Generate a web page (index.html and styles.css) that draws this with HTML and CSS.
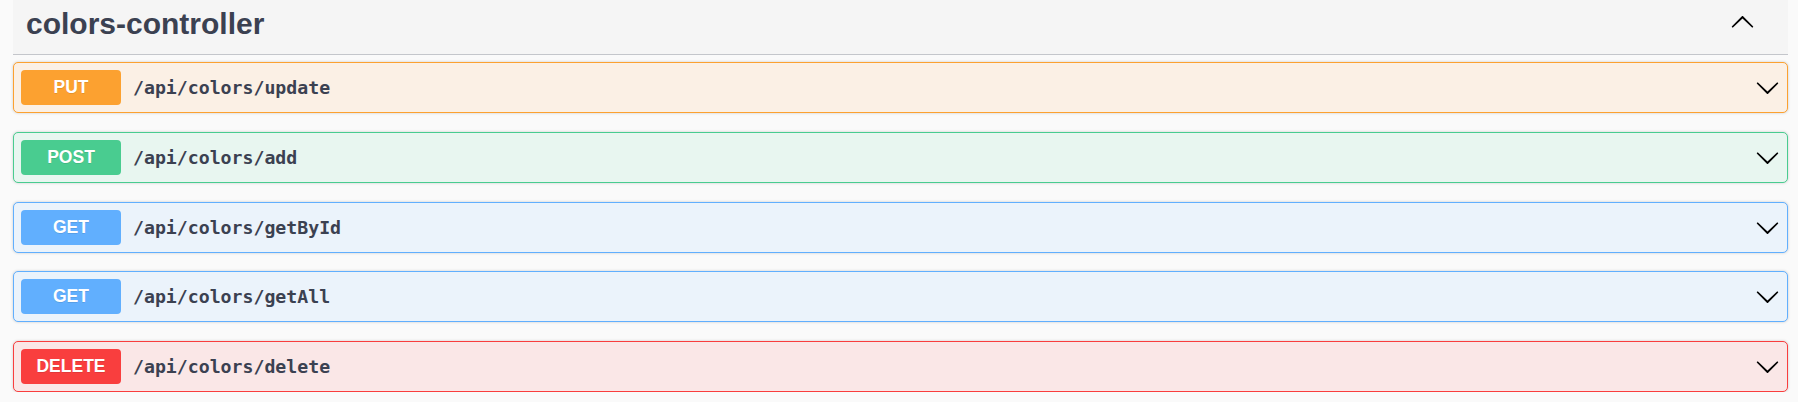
FILE: index.html
```html
<!DOCTYPE html>
<html lang="en">
<head>
<meta charset="utf-8">
<title>colors-controller</title>
<link rel="stylesheet" href="styles.css">
</head>
<body>
<div class="wrapper">
  <section class="tag-section">
    <h3 class="tag-header">
      <span class="tag-title">colors-controller</span>
      <svg class="arrow arrow-up" viewBox="0 0 20 20" width="25" height="25" aria-hidden="true"><path d="M17.418 6.109c.272-.268.709-.268.979 0s.271.701 0 .969l-7.908 7.83c-.27.268-.707.268-.979 0l-7.908-7.83c-.27-.268-.27-.701 0-.969.271-.268.709-.268.979 0L10 13.25l7.418-7.141z"/></svg>
    </h3>
    <div class="ops">
      <div class="opblock op-put">
        <span class="method">PUT</span>
        <span class="path">/api/colors/update</span>
        <svg class="arrow" viewBox="0 0 20 20" width="25" height="25" aria-hidden="true"><path d="M17.418 6.109c.272-.268.709-.268.979 0s.271.701 0 .969l-7.908 7.83c-.27.268-.707.268-.979 0l-7.908-7.83c-.27-.268-.27-.701 0-.969.271-.268.709-.268.979 0L10 13.25l7.418-7.141z"/></svg>
      </div>
      <div class="opblock op-post">
        <span class="method">POST</span>
        <span class="path">/api/colors/add</span>
        <svg class="arrow" viewBox="0 0 20 20" width="25" height="25" aria-hidden="true"><path d="M17.418 6.109c.272-.268.709-.268.979 0s.271.701 0 .969l-7.908 7.83c-.27.268-.707.268-.979 0l-7.908-7.83c-.27-.268-.27-.701 0-.969.271-.268.709-.268.979 0L10 13.25l7.418-7.141z"/></svg>
      </div>
      <div class="opblock op-get">
        <span class="method">GET</span>
        <span class="path">/api/colors/getById</span>
        <svg class="arrow" viewBox="0 0 20 20" width="25" height="25" aria-hidden="true"><path d="M17.418 6.109c.272-.268.709-.268.979 0s.271.701 0 .969l-7.908 7.83c-.27.268-.707.268-.979 0l-7.908-7.83c-.27-.268-.27-.701 0-.969.271-.268.709-.268.979 0L10 13.25l7.418-7.141z"/></svg>
      </div>
      <div class="opblock op-get">
        <span class="method">GET</span>
        <span class="path">/api/colors/getAll</span>
        <svg class="arrow" viewBox="0 0 20 20" width="25" height="25" aria-hidden="true"><path d="M17.418 6.109c.272-.268.709-.268.979 0s.271.701 0 .969l-7.908 7.83c-.27.268-.707.268-.979 0l-7.908-7.83c-.27-.268-.27-.701 0-.969.271-.268.709-.268.979 0L10 13.25l7.418-7.141z"/></svg>
      </div>
      <div class="opblock op-delete">
        <span class="method">DELETE</span>
        <span class="path">/api/colors/delete</span>
        <svg class="arrow" viewBox="0 0 20 20" width="25" height="25" aria-hidden="true"><path d="M17.418 6.109c.272-.268.709-.268.979 0s.271.701 0 .969l-7.908 7.83c-.27.268-.707.268-.979 0l-7.908-7.83c-.27-.268-.27-.701 0-.969.271-.268.709-.268.979 0L10 13.25l7.418-7.141z"/></svg>
      </div>
    </div>
  </section>
</div>
</body>
</html>
```
FILE: styles.css
```css
html, body {
  margin: 0;
  padding: 0;
  background: #fafafa;
}

body {
  font-family: "Liberation Sans", Arial, sans-serif;
  color: #3b4151;
}

.wrapper {
  padding: 0 10px 0 13px;
}

.tag-header {
  margin: 0;
  height: 55px;
  box-sizing: border-box;
  display: flex;
  align-items: flex-start;
  justify-content: space-between;
  padding: 7px 33px 0 13px;
  background: #f5f5f5;
  border-bottom: 1px solid #c4c6cb;
}

.tag-title {
  font-size: 30px;
  font-weight: bold;
  line-height: 34px;
  color: #3b4151;
}

.arrow {
  display: block;
  flex: none;
  fill: #000;
}

.arrow-up {
  margin-top: 3px;
  transform: rotate(180deg);
}

.ops {
  display: flex;
  flex-direction: column;
  gap: 18.75px;
  padding-top: 7px;
}

.opblock {
  height: 51px;
  box-sizing: border-box;
  display: flex;
  align-items: center;
  padding: 0 7px 0 7px;
  border: 1px solid;
  border-radius: 5px;
  box-shadow: 0 0 3px rgba(0, 0, 0, 0.19);
}

.method {
  width: 100px;
  height: 35px;
  flex: none;
  display: flex;
  align-items: center;
  justify-content: center;
  border-radius: 4px;
  color: #fff;
  font-family: "Liberation Sans", Arial, sans-serif;
  font-size: 17.5px;
  font-weight: bold;
  text-shadow: 0 1px 0 rgba(0, 0, 0, 0.1);
}

.path {
  flex: 1;
  padding-left: 12px;
  font-family: "DejaVu Sans Mono", "Liberation Mono", monospace;
  font-size: 18.2px;
  font-weight: bold;
  color: #3b4151;
}

.op-put {
  border-color: #fca130;
  background: #fbf0e5;
}
.op-put .method { background: #fca130; }

.op-post {
  border-color: #49cc90;
  background: #e8f6f0;
}
.op-post .method { background: #49cc90; }

.op-get {
  border-color: #61affe;
  background: #ebf3fb;
}
.op-get .method { background: #61affe; }

.op-delete {
  border-color: #f93e3e;
  background: #fae7e7;
}
.op-delete .method { background: #f93e3e; }
```
